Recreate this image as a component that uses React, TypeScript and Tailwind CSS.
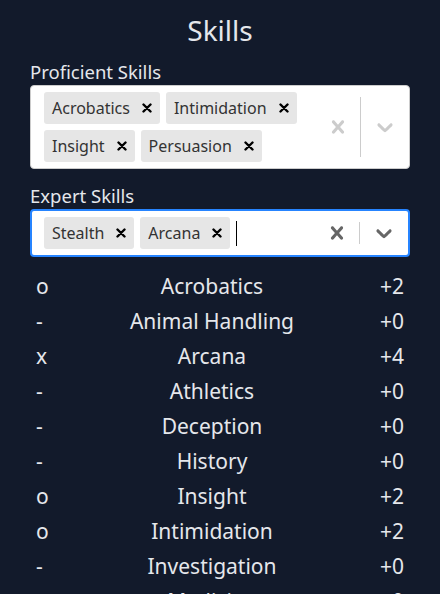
import React from "react";

type Skill = { mark: string; name: string; bonus: string };

const skills: Skill[] = [
  { mark: "o", name: "Acrobatics", bonus: "+2" },
  { mark: "-", name: "Animal Handling", bonus: "+0" },
  { mark: "x", name: "Arcana", bonus: "+4" },
  { mark: "-", name: "Athletics", bonus: "+0" },
  { mark: "-", name: "Deception", bonus: "+0" },
  { mark: "-", name: "History", bonus: "+0" },
  { mark: "o", name: "Insight", bonus: "+2" },
  { mark: "o", name: "Intimidation", bonus: "+2" },
  { mark: "-", name: "Investigation", bonus: "+0" },
  { mark: "-", name: "Medicine", bonus: "+0" },
];

const CrossIcon = ({ className }: { className?: string }) => (
  <svg viewBox="0 0 20 20" className={className} fill="currentColor">
    <path d="M14.348 14.849c-0.469 0.469-1.229 0.469-1.697 0l-2.651-3.030-2.651 3.029c-0.469 0.469-1.229 0.469-1.697 0-0.469-0.469-0.469-1.229 0-1.697l2.758-3.15-2.759-3.152c-0.469-0.469-0.469-1.228 0-1.697s1.228-0.469 1.697 0l2.652 3.031 2.651-3.031c0.469-0.469 1.228-0.469 1.697 0s0.469 1.229 0 1.697l-2.758 3.152 2.758 3.15c0.469 0.469 0.469 1.229 0 1.698z" />
  </svg>
);

const ChevronIcon = ({ className }: { className?: string }) => (
  <svg viewBox="0 0 20 20" className={className} fill="currentColor">
    <path d="M4.516 7.548c0.436-0.446 1.043-0.481 1.576 0l3.908 3.747 3.908-3.747c0.533-0.481 1.141-0.446 1.574 0 0.436 0.445 0.408 1.197 0 1.615-0.406 0.418-4.695 4.502-4.695 4.502-0.217 0.223-0.502 0.335-0.787 0.335s-0.57-0.112-0.789-0.335c0 0-4.287-4.084-4.695-4.502s-0.436-1.17 0-1.615z" />
  </svg>
);

const Tag = ({ label }: { label: string }) => (
  <div className="flex h-[32px] items-center rounded-[3px] bg-[#e6e6e6]">
    <span className="pl-[8px] pr-[4px] text-[16px] text-[#333333]">{label}</span>
    <span className="flex h-full items-center px-[8px] text-black">
      <svg viewBox="0 0 10 10" className="h-[10px] w-[10px]">
        <path d="M1.5 1.5 L8.5 8.5 M8.5 1.5 L1.5 8.5" stroke="currentColor" strokeWidth="2.4" strokeLinecap="round" />
      </svg>
    </span>
  </div>
);

const MultiSelect = ({
  values,
  focused,
}: {
  values: string[];
  focused?: boolean;
}) => (
  <div
    className={
      focused
        ? "flex rounded-[4px] border-2 border-[#2684ff] bg-white"
        : "flex rounded-[4px] border border-[#cccccc] bg-white"
    }
  >
    <div
      className={
        focused
          ? "flex flex-1 flex-wrap items-center gap-x-[6px] gap-y-[6px] py-[6px] pl-[12px]"
          : "flex flex-1 flex-wrap items-center gap-x-[6px] gap-y-[6px] py-[6px] pl-[13px]"
      }
    >
      {values.map((v) => (
        <Tag key={v} label={v} />
      ))}
      {focused && <div className="h-[25px] w-px bg-black" />}
    </div>
    <div className="flex items-center">
      <div className={focused ? "px-[9px] text-[#666666]" : "px-[9px] text-[#cccccc]"}>
        <CrossIcon className="h-[26px] w-[26px]" />
      </div>
      <div className="my-[11px] w-px self-stretch bg-[#cccccc]" />
      <div className={focused ? "px-[11px] text-[#666666]" : "px-[11px] text-[#cccccc]"}>
        <ChevronIcon className="h-[26px] w-[26px]" />
      </div>
    </div>
  </div>
);

export default function App() {
  return (
    <div className="h-[594px] overflow-hidden bg-[#121a2b] font-['Noto_Sans',sans-serif] text-gray-200">
      <div className="px-[30px] pt-[10px]">
        <h1 className="text-center text-[28px] leading-[40px]">Skills</h1>
        <div className="mt-[10px] text-[18.5px] leading-[24px]">Proficient Skills</div>
        <div className="mt-[1px]">
          <MultiSelect values={["Acrobatics", "Intimidation", "Insight", "Persuasion"]} />
        </div>
        <div className="mt-[15px] text-[18.5px] leading-[24px]">Expert Skills</div>
        <div className="mt-[1px]">
          <MultiSelect values={["Stealth", "Arcana"]} focused />
        </div>
        <div className="mt-[12px] flex flex-col px-[6px]">
          {skills.map((s) => (
            <div key={s.name} className="flex h-[35px] items-center text-[21px]">
              <span className="w-[24px]">{s.mark}</span>
              <span className="flex-1 text-center">{s.name}</span>
              <span className="w-[40px] text-right">{s.bonus}</span>
            </div>
          ))}
        </div>
      </div>
    </div>
  );
}
